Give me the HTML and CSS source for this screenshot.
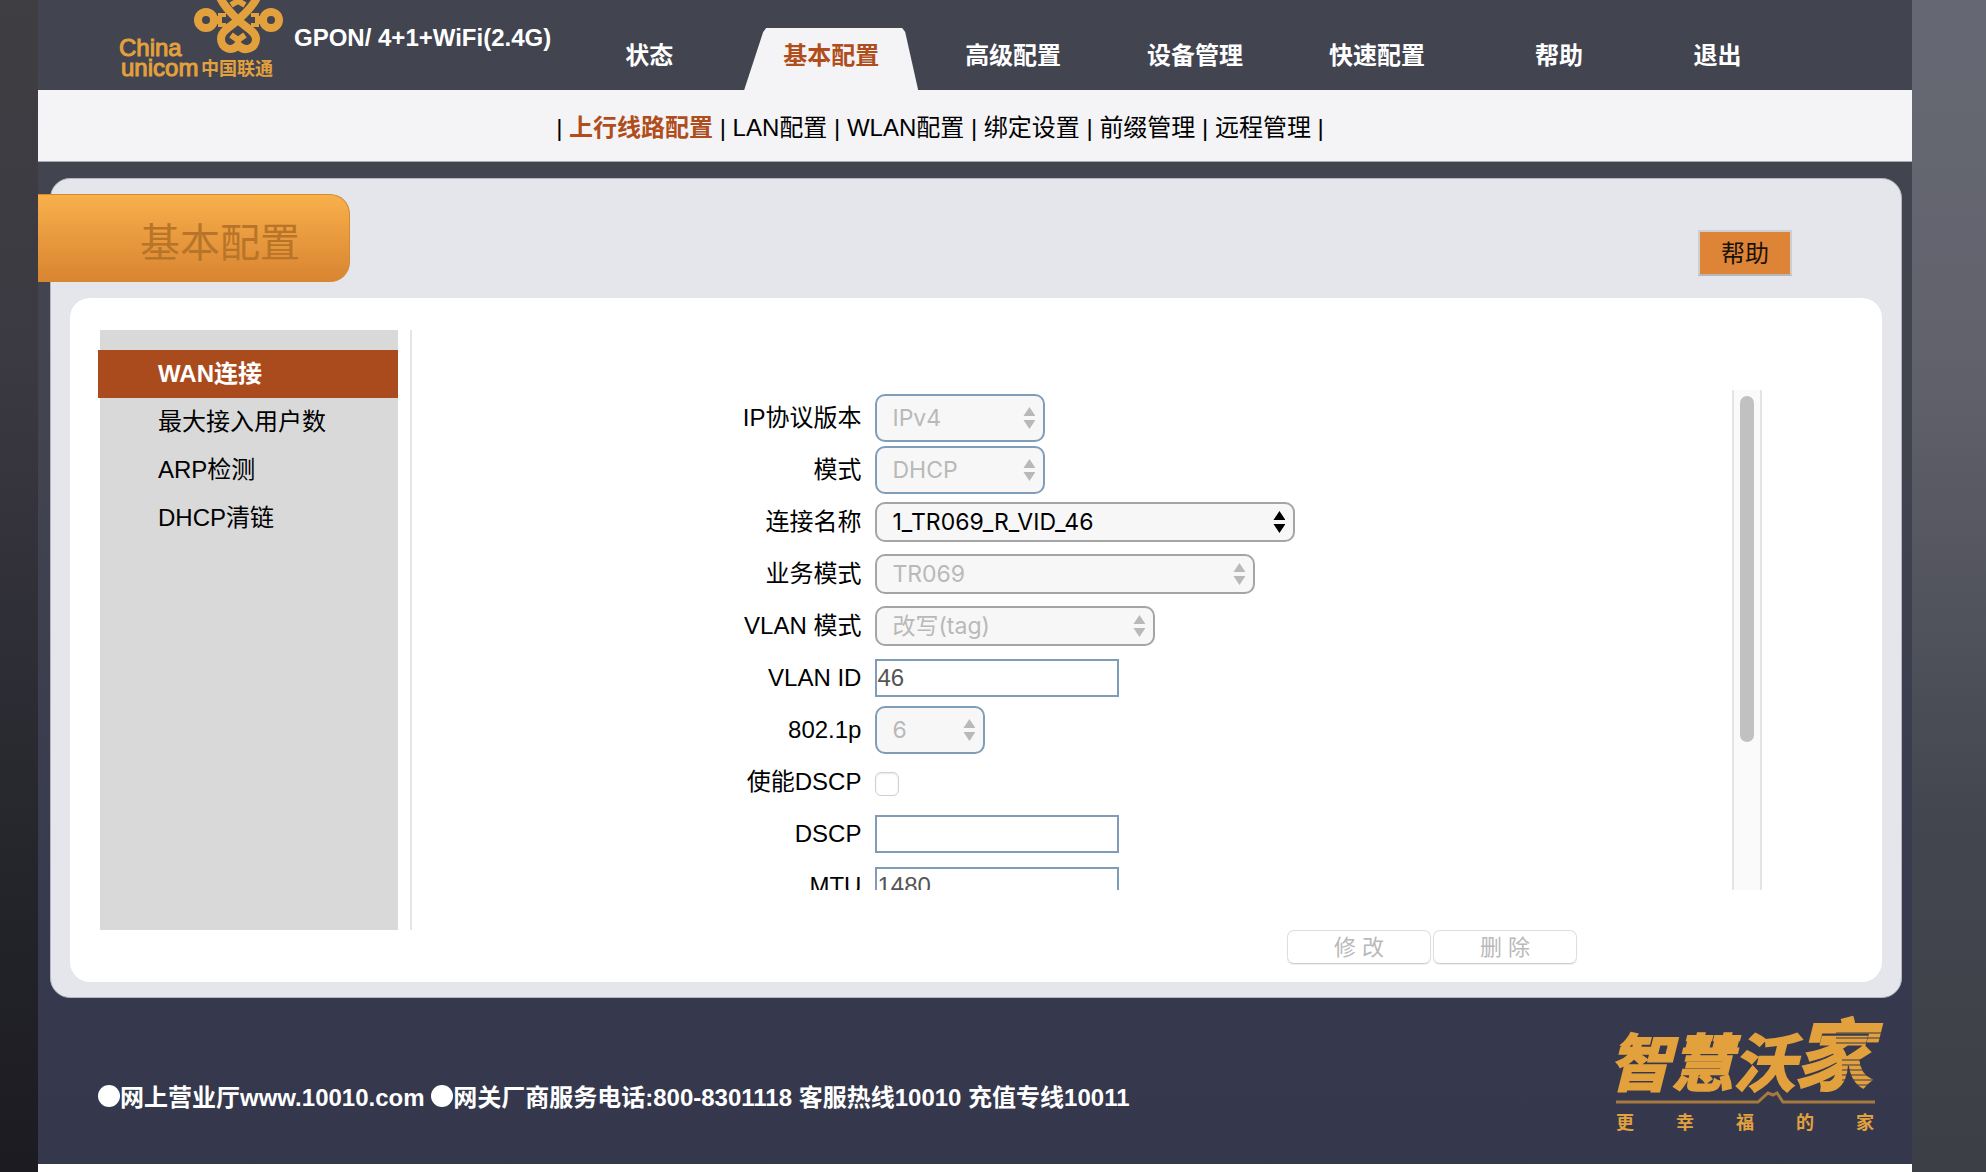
FILE: index.html
```html
<!DOCTYPE html>
<html lang="zh-CN">
<head>
<meta charset="utf-8">
<title>基本配置</title>
<link rel="stylesheet" href="styles.css">
</head>
<body>
<div class="page">
  <div class="shell">
    <header class="header">
      <svg class="logo" viewBox="0 0 170 90" role="img" aria-label="China unicom 中国联通">
        <g class="knot">
          <circle cx="90" cy="20" r="8"/>
          <circle cx="155" cy="20" r="8"/>
          <path d="M98 20h8M147 20h-8M106 13v4M106 23v4M139 13v4M139 23v4"/>
          <path d="M103 -5C106 4 114 12 122 20S140 31 140 39C140 48 129 53 122 45"/>
          <path d="M142 -5C139 4 131 12 122 20S105 31 105 39C105 48 116 53 122 45"/>
          <path class="knot-thin" d="M122 47V38M115 35l7 5l7 -5M122 -3V4M115 5l7 -4l7 4"/>
        </g>
        <text class="logo-latin" x="3" y="56">China</text>
        <text class="logo-latin" x="5" y="76">unicom</text>
        <text class="logo-cjk" x="85" y="75">中国联通</text>
      </svg>
      <span class="model">GPON/ 4+1+WiFi(2.4G)</span>
      <nav class="nav">
        <a href="#">状态</a>
        <a href="#" class="current"><span class="tab">基本配置</span></a>
        <a href="#">高级配置</a>
        <a href="#">设备管理</a>
        <a href="#">快速配置</a>
        <a href="#">帮助</a>
        <a href="#" class="narrow">退出</a>
      </nav>
    </header>
    <nav class="subnav">
      <span>| <a href="#" class="current">上行线路配置</a> | <a href="#">LAN配置</a> | <a href="#">WLAN配置</a> | <a href="#">绑定设置</a> | <a href="#">前缀管理</a> | <a href="#">远程管理</a> |</span>
    </nav>
    <main class="panel">
      <div class="panel-head">
        <h1 class="title">基本配置</h1>
        <button type="button" class="help">帮助</button>
      </div>
      <div class="card">
        <nav class="side">
          <a href="#" class="current">WAN连接</a>
          <a href="#">最大接入用户数</a>
          <a href="#">ARP检测</a>
          <a href="#">DHCP清链</a>
        </nav>
        <form class="content">
          <div class="scroll">
            <div class="fields">
              <div class="row"><label for="ipver">IP协议版本</label><span class="pick tall w170 off"><select id="ipver" disabled><option>IPv4</option></select></span></div>
              <div class="row"><label for="mode">模式</label><span class="pick tall w170 off"><select id="mode" disabled><option>DHCP</option></select></span></div>
              <div class="row"><label for="conn">连接名称</label><span class="pick w420"><select id="conn"><option>1_TR069_R_VID_46</option></select></span></div>
              <div class="row"><label for="service">业务模式</label><span class="pick w380 off"><select id="service" disabled><option>TR069</option></select></span></div>
              <div class="row"><label for="vmode">VLAN 模式</label><span class="pick w280 off"><select id="vmode" disabled><option>改写(tag)</option></select></span></div>
              <div class="row"><label for="vlan">VLAN ID</label><input type="text" id="vlan" value="46" disabled></div>
              <div class="row"><label for="prio">802.1p</label><span class="pick tall w110 off"><select id="prio" disabled><option>6</option></select></span></div>
              <div class="row"><label for="usedscp">使能DSCP</label><input type="checkbox" id="usedscp" disabled></div>
              <div class="row"><label for="dscp">DSCP</label><input type="text" id="dscp" disabled></div>
              <div class="row"><label for="mtu">MTU</label><input type="text" id="mtu" value="1480" disabled></div>
            </div>
            <div class="track"><div class="thumb"></div></div>
          </div>
          <div class="actions">
            <button type="button" disabled>修 改</button>
            <button type="button" disabled>删 除</button>
          </div>
        </form>
      </div>
    </main>
    <footer class="footer">
      <p class="contact"><span class="dot"></span>网上营业厅www.10010.com <span class="dot"></span>网关厂商服务电话:800-8301118 客服热线10010 充值专线10011</p>
      <svg class="brand" viewBox="0 0 274 124" role="img" aria-label="智慧沃家 更幸福的家">
        <text class="brand-main" x="-5 57 119" y="76">智慧沃</text>
        <text class="brand-home" x="180" y="74">家</text>
        <path class="stripes" d="M222 23h48M222 28h48M222 33h48M228 50h40M228 55h40M228 60h40M228 65h40M228 70h40M228 75h40"/>
        <path class="rule" d="M2 92h142l10 -9l5 2l4 -2l6 9h92"/>
        <text class="brand-sub" x="2 62 122 182 242" y="119">更幸福的家</text>
      </svg>
    </footer>
  </div>
</div>
</body>
</html>
```
FILE: styles.css
```css
* { box-sizing: border-box; }

body {
  margin: 0;
  font: 24px/28px "Liberation Sans", Arial, "Noto Sans CJK SC", sans-serif;
  color: #000;
  background:
    linear-gradient(#3f3e42, #3b3a42 30%, #24242b 75%, #1c1b22) left / 50% 100% no-repeat,
    linear-gradient(#656872, #62626d 30%, #43464f 70%, #3c3f45) right / 50% 100% no-repeat;
}

a { color: inherit; text-decoration: none; }

.page {
  margin: 0 74px 0 38px;
  min-height: 100vh;
  background: #fff;
}

.shell { background: linear-gradient(#424450, #41434f 40%, #373a4f 80%, #35384c); }

.header {
  display: flex;
  align-items: flex-start;
  height: 90px;
}

.logo {
  flex: none;
  width: 170px;
  height: 90px;
  margin-left: 78px;
  fill: #e3a13d;
}
.knot { fill: none; stroke: #e3a13d; stroke-width: 8; }
.knot-thin { stroke-width: 6; }
.logo-latin { font-size: 24px; stroke: #e3a13d; stroke-width: 1px; }
.logo-cjk { font-size: 18px; font-weight: bold; }

.model {
  flex: none;
  margin: 24px 0 0 8px;
  font-weight: bold;
  color: #fff;
}

.nav {
  display: flex;
  flex: 1;
  padding: 28px 127px 0 7px;
  font-weight: bold;
  color: #fff;
}
.nav a {
  flex: 182 1 0;
  text-align: center;
  line-height: 56px;
  white-space: nowrap;
}
.nav .narrow { flex-grow: 135; }
.nav .current { color: #b04d1c; }
.tab {
  display: block;
  width: 174px;
  height: 62px;
  margin: 0 auto;
  background: #f4f4f6;
  clip-path: polygon(0 100%, 19px 4px, 22px 0, 158px 0, 161px 4px, 100% 100%);
}

.subnav {
  height: 72px;
  padding: 24px 70px 0 0;
  text-align: center;
  background: #f4f4f6;
  border-bottom: 1px solid #a9a9b3;
}
.subnav .current { font-weight: bold; color: #b04d1c; }

.panel {
  margin: 16px 10px 0 12px;
  padding: 15px 19px;
  background: #e5e6eb;
  border: 1px solid #b5b5be;
  border-radius: 20px;
}
.panel-head {
  display: flex;
  justify-content: space-between;
  align-items: flex-start;
  height: 104px;
}
.title {
  width: 312px;
  height: 88px;
  margin: 0 0 0 -32px;
  padding: 22px 0 0 102px;
  font-size: 40px;
  line-height: 52px;
  font-weight: normal;
  color: #b87428;
  background: linear-gradient(#f8b04b, #d98431);
  border: 1px solid #d18b30;
  border-left: 0;
  border-radius: 0 20px 20px 0;
}
.help {
  width: 94px;
  height: 46px;
  margin: 36px 90px 0 0;
  padding: 2px 0 0;
  font: inherit;
  color: #1c1108;
  background: #dd8437;
  border: 2px solid #cfcfd2;
  border-bottom-color: #b8b8ba;
}

.card {
  display: flex;
  gap: 12px;
  padding: 32px 120px 18px 30px;
  background: #fff;
  border-radius: 20px;
}

.side {
  flex: none;
  width: 298px;
  height: 600px;
  padding-top: 20px;
  background: #d9d9d9;
}
.side a {
  display: block;
  padding-left: 58px;
  line-height: 48px;
}
.side .current {
  margin-left: -2px;
  padding-left: 60px;
  font-weight: bold;
  color: #fff;
  background: #aa4b1d;
}

.content {
  flex: 1;
  min-width: 0;
  padding-top: 60px;
  background: linear-gradient(#e4e4e9, #e4e4e9) left top / 2px 600px no-repeat;
}

.scroll {
  display: flex;
  height: 500px;
  overflow: hidden;
}
.fields { flex: 1; padding: 2px 0 0 3px; }
.row {
  display: grid;
  grid-template-columns: 34% 1fr;
  column-gap: 14px;
  align-items: center;
  height: 52px;
}
.row label { text-align: right; }

.pick { position: relative; display: block; height: 40px; color: #000; }
.pick::after {
  content: "";
  position: absolute;
  right: 10px;
  top: calc(50% - 11px);
  width: 12px;
  height: 22px;
  background: currentColor;
  clip-path: polygon(0 9px, 6px 0, 12px 9px, 0 9px, 0 13px, 12px 13px, 6px 22px, 0 13px);
  pointer-events: none;
}
.pick select {
  appearance: none;
  width: 100%;
  height: 100%;
  padding: 0 30px 0 15px;
  font: 23px/28px Inter, "Noto Sans CJK SC", sans-serif;
  color: inherit;
  opacity: 1;
  background: #f7f7f7;
  border: 2px solid #a5a5a5;
  border-radius: 10px;
}
.off { color: #b9b9b9; }
.tall { height: 48px; }
.tall select { border-color: #7f9db9; }
.w110 { width: 110px; }
.w170 { width: 170px; }
.w280 { width: 280px; }
.w380 { width: 380px; }
.w420 { width: 420px; }

input[type="text"] {
  width: 244px;
  height: 38px;
  padding: 0;
  font: inherit;
  color: #555;
  background: #fff;
  border: 2px solid #7f9db9;
}
input[type="checkbox"] {
  appearance: none;
  width: 24px;
  height: 24px;
  margin: 4px 0 0;
  background: #fff;
  border: 1px solid #d0d0d0;
  border-radius: 6px;
  box-shadow: inset 0 1px 2px #e8e8e8;
}

.track {
  width: 30px;
  padding: 6px 6px 0;
  background: #fafafa;
  border: solid #e4e4e4;
  border-width: 0 2px;
}
.thumb { height: 346px; background: #c1c1c1; border-radius: 8px; }

.actions {
  display: flex;
  justify-content: flex-end;
  gap: 2px;
  margin: 40px 185px 0 0;
}
.actions button {
  width: 144px;
  height: 34px;
  padding: 1px 0 0;
  font: inherit;
  font-size: 22px;
  color: #b9b9b9;
  background: #fff;
  border: 1px solid #dedede;
  border-bottom-color: #cfcfcf;
  border-radius: 7px;
  box-shadow: 0 1px 1px #eee;
}

.footer {
  display: flex;
  justify-content: space-between;
  align-items: flex-start;
  height: 166px;
  padding: 12px 24px 0 60px;
}
.contact {
  margin: 74px 0 0;
  font-weight: bold;
  color: #fff;
}
.dot {
  display: inline-block;
  width: 22px;
  height: 22px;
  border-radius: 50%;
  background: #fff;
  vertical-align: -1px;
}
.brand { flex: none; width: 274px; height: 124px; fill: #e3a13d; }
.brand-main { font-size: 62px; font-weight: bold; font-style: italic; stroke: #e3a13d; stroke-width: 2px; }
.brand-home { font-size: 78px; font-weight: bold; font-style: italic; stroke: #e3a13d; stroke-width: 2px; }
.brand-sub { font-size: 18px; font-weight: bold; }
.stripes { stroke: #373a4f; stroke-width: 1px; }
.rule { fill: none; stroke: #a67a3e; stroke-width: 3; }
```
